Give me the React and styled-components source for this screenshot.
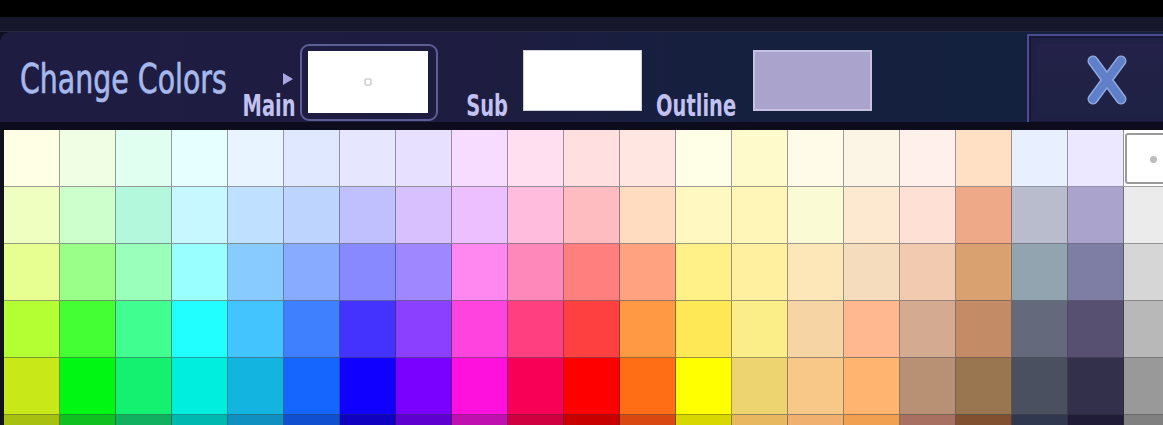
import styled, { createGlobalStyle } from "styled-components"

const GlobalStyle = createGlobalStyle`
  html, body {
    margin: 0;
    padding: 0;
    background: #0e0e1e;
    overflow: hidden;
  }
  #root {
    width: 1163px;
    height: 425px;
    overflow: hidden;
  }
`

const rows = [
  ["#ffffe6", "#f0ffe4", "#e0fff0", "#e6ffff", "#e8f4ff", "#e0e8ff", "#e6e6ff", "#e8e0ff", "#f8dcff", "#ffdff0", "#ffdfe0", "#ffe6e0", "#fffee6", "#fffacc", "#fffbe8", "#fcf4e4", "#fff0ec", "#ffe0c4", "#e8f0ff", "#ece8ff", "#ffffff"],
  ["#eeffc0", "#ccffcc", "#b3f8dc", "#c8f8ff", "#c0e0ff", "#bcd4ff", "#c0c0ff", "#d8c0ff", "#ecc0ff", "#ffbcdc", "#ffbcc0", "#ffdcc0", "#fff8c0", "#fff6b8", "#fafad4", "#fde9d0", "#ffe0d4", "#eeaa88", "#b8bccc", "#aaa4cc", "#ebebeb"],
  ["#e6ff90", "#99ff88", "#99ffbb", "#99ffff", "#88ccff", "#88aaff", "#8888ff", "#9f88ff", "#ff88f0", "#ff88bb", "#ff7f7f", "#ffa280", "#fff088", "#fff0a0", "#fde6b8", "#f4dcbc", "#f2cab0", "#d9a070", "#92a4b0", "#7e7ea4", "#d6d6d6"],
  ["#b3ff33", "#44ff33", "#40ff90", "#22ffff", "#44c4ff", "#3f80ff", "#4433ff", "#8c40ff", "#ff44dd", "#ff3f80", "#ff4040", "#ff9944", "#ffe855", "#fbee88", "#f6d4a4", "#ffb890", "#d4aa90", "#c48c66", "#646a7c", "#575070", "#b8b8b8"],
  ["#c8e818", "#00f714", "#14f070", "#00eedd", "#14b4e0", "#1466ff", "#1000ff", "#7a00ff", "#ff11dd", "#f80055", "#ff0000", "#ff6e14", "#ffff00", "#eed470", "#f8c888", "#ffb470", "#b89074", "#9a7650", "#4a5060", "#32304a", "#999999"],
  ["#a8c010", "#10c020", "#10b060", "#00b8b0", "#1090c0", "#1050d0", "#1000c0", "#6000d0", "#c010b0", "#d00040", "#c80000", "#d84810", "#d8d800", "#e8b860", "#f0b070", "#f0a050", "#a87060", "#805030", "#303850", "#201c38", "#808080"],
]

const Screen = styled.div`
  display: flex;
  flex-direction: column;
  font-family: "DejaVu Sans Condensed", "Liberation Sans", sans-serif;
`

const TopBar = styled.div`
  height: 17px;
  background: #000;
`

const Strip = styled.div`
  height: 14px;
  background: #16162c;
  border-bottom: 1px solid #262640;
`

const Panel = styled.div`
  display: flex;
  align-items: flex-end;
  height: 90px;
  padding-left: 20px;
  border-radius: 10px 0 0 0;
  background: linear-gradient(90deg, #1f1c42 0%, #1d1d40 45%, #14203e 65%, #13203e 100%);
`

const Title = styled.div`
  width: 222px;
  margin-bottom: 23px;
  font-size: 41px;
  line-height: 40px;
  color: #a6b8ec;
  white-space: nowrap;
  -webkit-text-stroke: 0.7px #a6b8ec;

  span {
    display: inline-block;
    transform: scaleX(0.77);
    transform-origin: left center;
  }
`

const LabelBox = styled.div`
  display: flex;
  flex-direction: column;
  align-items: flex-end;
  width: ${(p) => p.$w}px;
  margin-left: ${(p) => p.$ml || 0}px;
  margin-right: ${(p) => p.$mr || 0}px;
  margin-bottom: 1px;
`

const Arrow = styled.div`
  width: 0;
  height: 0;
  margin: 0 3px 6px 0;
  border-top: 6px solid transparent;
  border-bottom: 6px solid transparent;
  border-left: 10px solid #a6a6e2;
`

const Label = styled.div`
  display: inline-block;
  font-size: 30px;
  line-height: 30px;
  font-weight: bold;
  color: #c2c2f2;
  white-space: nowrap;
  transform: scaleX(0.72);
  transform-origin: right center;
`

const MainFrame = styled.div`
  padding: 5px 8px 6px 6px;
  margin-bottom: 1px;
  border: 2px solid #5e5e96;
  border-radius: 9px;
`

const Swatch = styled.div`
  position: relative;
  width: ${(p) => p.$w}px;
  height: ${(p) => p.$h}px;
  margin-bottom: ${(p) => p.$mb || 0}px;
  background: ${(p) => p.$color};
  box-sizing: border-box;
  border: ${(p) => p.$border || "none"};
`

const Marker = styled.div`
  position: absolute;
  left: 50%;
  top: 50%;
  width: 5px;
  height: 5px;
  transform: translate(-50%, -50%);
  border: 1.5px solid #b4b4b4;
  border-radius: 1px;
`

const Spacer = styled.div`
  flex: 1;
`

const CloseButton = styled.div`
  display: flex;
  align-items: center;
  justify-content: center;
  flex-shrink: 0;
  width: 160px;
  height: 91px;
  margin-right: -24px;
  margin-bottom: -3px;
  box-sizing: border-box;
  border: 2px solid #4c4c92;
  background: linear-gradient(180deg, #242148 0%, #1e2244 100%);
  box-shadow: inset 0 0 0 2px #18183a, inset 0 0 0 8px #201f44;
`

const BottomBand = styled.div`
  height: 8px;
  background: #0c0c1c;
`

const GridArea = styled.div`
  padding-left: 4px;
  background: #10101e;
`

const Grid = styled.div`
  display: grid;
  grid-template-columns: repeat(21, 56px);
  grid-auto-rows: 57px;
`

const Cell = styled.div`
  position: relative;
  background: ${(p) => p.$color};
  box-shadow: inset -1px -1px 0 rgba(40, 40, 50, 0.45);
`

const Selected = styled.div`
  position: absolute;
  inset: 3px 0 3px 1px;
  border: 2px solid #9a9a9a;
  border-radius: 3px;
  background: #fff;

  &::after {
    content: "";
    position: absolute;
    left: 23px;
    top: 21px;
    width: 7px;
    height: 7px;
    border-radius: 50%;
    background: #bdbdbd;
  }
`

function CloseIcon() {
  return (
    <svg width="42" height="52" viewBox="0 0 42 52">
      <line x1="7" y1="7" x2="35" y2="45" stroke="#8ea6de" strokeWidth="11" strokeLinecap="round" />
      <line x1="35" y1="7" x2="7" y2="45" stroke="#8ea6de" strokeWidth="11" strokeLinecap="round" />
      <line x1="7" y1="7" x2="35" y2="45" stroke="#5f80c8" strokeWidth="8" strokeLinecap="round" />
      <line x1="35" y1="7" x2="7" y2="45" stroke="#5f80c8" strokeWidth="8" strokeLinecap="round" />
    </svg>
  )
}

export default function App() {
  return (
    <Screen>
      <GlobalStyle />
      <TopBar />
      <Strip />
      <Panel>
        <Title>
          <span>Change Colors</span>
        </Title>
        <LabelBox $w={54} $mr={4}>
          <Arrow />
          <Label>Main</Label>
        </LabelBox>
        <MainFrame>
          <Swatch $w={120} $h={62} $color="#ffffff">
            <Marker />
          </Swatch>
        </MainFrame>
        <LabelBox $w={46} $ml={24} $mr={15}>
          <Label>Sub</Label>
        </LabelBox>
        <Swatch $w={119} $h={61} $mb={11} $color="#ffffff" $border="1px solid #d0d0d8" />
        <LabelBox $w={84} $ml={10} $mr={17}>
          <Label>Outline</Label>
        </LabelBox>
        <Swatch $w={119} $h={61} $mb={11} $color="#aaa4cc" $border="2px solid #c6c2e2" />
        <Spacer />
        <CloseButton>
          <CloseIcon />
        </CloseButton>
      </Panel>
      <BottomBand />
      <GridArea>
        <Grid>
          {rows.map((row, r) =>
            row.map((c, i) => (
              <Cell key={r + "-" + i} $color={c}>
                {r === 0 && i === 20 && <Selected />}
              </Cell>
            ))
          )}
        </Grid>
      </GridArea>
    </Screen>
  )
}
